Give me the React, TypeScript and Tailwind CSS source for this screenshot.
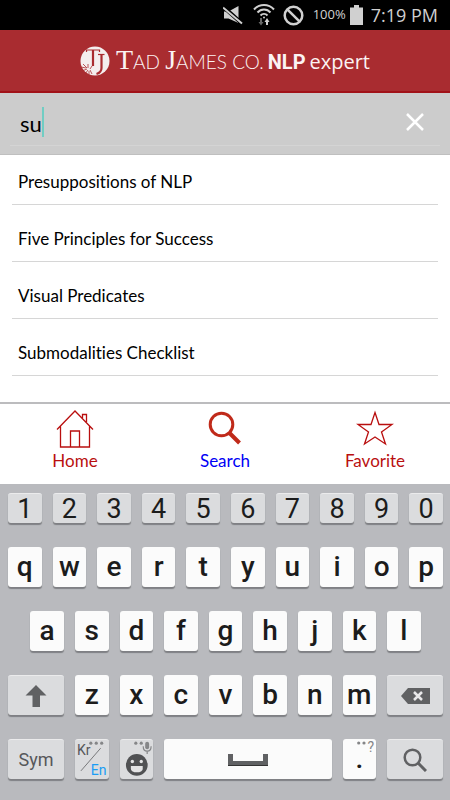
import React from "react";

const results = [
  "Presuppositions of NLP",
  "Five Principles for Success",
  "Visual Predicates",
  "Submodalities Checklist",
];

function StatusBar() {
  return (
    <div className="flex h-[30px] items-center justify-end bg-black pr-3 text-[#d0d0d0]">
      <svg className="mr-[10px] h-5 w-5" viewBox="0 0 20 20" fill="currentColor" aria-label="Muted">
        <path d="M1 6.500h4.500L15.500 1v17L5.500 13.500H1z" />
        <path d="M0 1.500L19 18.500" stroke="#000" strokeWidth="4" />
        <path d="M0 2.500L19 18.500" stroke="currentColor" strokeWidth="2" />
      </svg>
      <svg className="mr-2 h-6 w-[22px]" viewBox="0 0 22 24" fill="none" stroke="currentColor" strokeWidth="2" aria-label="Wi-Fi">
        <path d="M1 6.500C6.500 0.500 15.500 0.500 21 6.500M4.500 9.500c3.500-4 9.500-4 13 0M7.500 12.500c2-2 5-2 7 0" />
        <circle cx="11" cy="14.500" r="1" fill="currentColor" stroke="none" />
        <path d="M8 15v4" stroke="#666" />
        <path d="M5.500 19h5L8 22.500z" fill="#666" stroke="none" />
        <path d="M14 22v-4" />
        <path d="M11.500 19h5L14 15z" fill="currentColor" stroke="none" />
      </svg>
      <svg className="mr-[9px] h-[21px] w-[21px]" viewBox="0 0 21 21" fill="none" stroke="currentColor" strokeWidth="2.500" aria-label="Blocking mode">
        <circle cx="10.500" cy="10.500" r="8.800" />
        <path d="M4.300 4.300l12.400 12.400" />
      </svg>
      <span className="mr-1 font-['Open_Sans'] text-[13px]">100%</span>
      <svg className="mr-2 h-5 w-[13px]" viewBox="0 0 13 20" fill="currentColor" aria-label="Battery">
        <path d="M4 0h5v2.500h4V20H0V2.500h4z" />
      </svg>
      <span className="font-['Open_Sans'] text-lg">7:19 PM</span>
    </div>
  );
}

function Logo() {
  return (
    <svg className="mr-[6px] h-[30px] w-[30px] shrink-0" viewBox="0 0 30 30" aria-hidden="true">
      <circle cx="15" cy="15" r="14.500" fill="#f4eeee" />
      <g fill="none" stroke="#a92c30">
        <path d="M6.500 6V4h13v2" strokeWidth="1.200" />
        <path d="M13 4v16" strokeWidth="2.200" />
        <path d="M18 8.500h6.500" strokeWidth="1.200" />
        <path d="M21.500 8.500V22c0 3-2 5-5 6" strokeWidth="2.200" />
        <path d="M1 21l5 1M2 25l5-2M5 28l3-4M9 29l0-4M12 28l-2-4M3 18l4 4M8 18l0 4M12 20l-2 3" strokeWidth="0.800" />
      </g>
    </svg>
  );
}

function Header() {
  return (
    <header className="flex h-[63px] items-center justify-center border-b-2 border-[#a11218] bg-[#a92c30] text-[#fbf3f3]">
      <Logo />
      <h1 className="flex items-baseline leading-8 whitespace-nowrap">
        <span className="font-['Lato'] text-[19px] font-light">
          <span className="font-['Liberation_Serif'] text-[28px]">T</span>AD{" "}
          <span className="font-['Liberation_Serif'] text-[28px]">J</span>AMES CO.
        </span>
        <span className="ml-1 font-['Roboto'] text-xl font-bold">NLP</span>
        <span className="ml-1 font-['Open_Sans'] text-xl font-medium">expert</span>
      </h1>
    </header>
  );
}

function SearchBar() {
  return (
    <form className="border-b border-[#bfbfbf] bg-[#ccc] px-[10px] pb-2" onSubmit={(e) => e.preventDefault()}>
      <div className="flex h-[53px] items-center border-b border-[#d4d4d4] pt-[6px] pr-[14px] pl-[10px]">
        <input
          type="text"
          aria-label="Search"
          defaultValue="su"
          className="field-sizing-content shrink-0 bg-transparent pt-1 pr-2 font-['Lato'] text-[22px] leading-9 text-black outline-none"
        />
        <span className="-ml-2 h-[30px] w-[2px] bg-[#70cdc3]" />
        <button type="button" aria-label="Clear" className="ml-auto">
          <svg className="h-[22px] w-[22px]" viewBox="0 0 22 22" stroke="#fff" strokeWidth="2.500">
            <path d="M3 3l16 16M19 3L3 19" />
          </svg>
        </button>
      </div>
    </form>
  );
}

function Results() {
  return (
    <ul className="flex-1 bg-white px-3">
      {results.map((title) => (
        <li key={title} className="flex h-[57px] items-end border-b border-[#d6d6d6] pb-[10px] pl-[6px] first:h-[50px]">
          <a href="#" className="font-['Lato'] text-[17px] leading-6 text-black [font-variant-ligatures:none]">{title}</a>
        </li>
      ))}
    </ul>
  );
}

function Nav() {
  const item = "flex flex-1 flex-col items-center font-['Lato'] text-[17px] leading-6";
  return (
    <nav className="flex h-[82px] border-t-2 border-[#bcbcbe] bg-white pt-[5px] text-[#b90f0f]">
      <a href="#" className={item}>
        <svg className="h-10 w-[38px]" viewBox="0 0 38 40" fill="none" stroke="currentColor" strokeWidth="1.300">
          <path d="M1 20.500L19 2l18 18.500M4.500 17.500v20.500h29V17.500M14.500 38V22h9v16M26.500 9V5.500h4V13" />
        </svg>
        Home
      </a>
      <a href="#" className={`${item} text-[#0000f5]`}>
        <svg className="h-10 w-[38px]" viewBox="0 0 38 40" fill="none" stroke="#c02a1a">
          <circle cx="15.500" cy="15.500" r="11.300" strokeWidth="3" />
          <path d="M23.500 24l10 10" strokeWidth="4" />
        </svg>
        Search
      </a>
      <a href="#" className={item}>
        <svg className="h-10 w-[38px]" viewBox="0 0 38 40" fill="none" stroke="currentColor" strokeWidth="1.300">
          <path d="M19 3.500l4 12h13l-10.500 7.500 4 12L19 28 8.500 35l4-12L2 15.500h13z" />
        </svg>
        Favorite
      </a>
    </nav>
  );
}

type KeyProps = { children: React.ReactNode; className?: string; grey?: boolean; label?: string };

function Key({ children, className = "col-span-2 h-10 text-[28px] font-medium", grey, label }: KeyProps) {
  return (
    <button
      type="button"
      aria-label={label}
      className={`relative flex items-center justify-center rounded-[3px] leading-8 shadow-[0_2px_1px_#7f8084] ${
        grey ? "border-t border-[#ebebec] bg-[#dbdcde]" : "bg-[#fbfbfb]"
      } ${className}`}
    >
      {children}
    </button>
  );
}

function Keyboard() {
  const row = "grid grid-cols-20 gap-x-[11px]";
  return (
    <section aria-label="Keyboard" className="flex flex-col gap-6 bg-[#b9babe] pt-[9px] pr-[7px] pb-[21px] pl-2 font-['Roboto'] text-[#1c1c1c]">
      <div className={row}>
        {[..."1234567890"].map((k) => (
          <Key key={k} grey className="col-span-2 h-[30px] text-[27px] font-normal">{k}</Key>
        ))}
      </div>
      <div className={row}>
        {[..."qwertyuiop"].map((k) => <Key key={k}>{k}</Key>)}
      </div>
      <div className={row}>
        <span />
        {[..."asdfghjkl"].map((k) => <Key key={k}>{k}</Key>)}
      </div>
      <div className={row}>
        <Key grey label="Shift" className="col-span-3 h-10">
          <svg className="h-6 w-[22px]" viewBox="0 0 22 24" fill="#606163">
            <path d="M11 1l10.500 10.500H15V23H7.500V11.500H.5z" />
          </svg>
        </Key>
        {[..."zxcvbnm"].map((k) => <Key key={k}>{k}</Key>)}
        <Key grey label="Backspace" className="col-span-3 h-10">
          <svg className="h-4 w-[29px]" viewBox="0 0 29 16" fill="#606163">
            <path d="M0 8l7-8h22v16H7z" />
            <path d="M13 4l8 8M21 4l-8 8" stroke="#e8e8e9" strokeWidth="2.500" />
          </svg>
        </Key>
      </div>
      <div className={row}>
        <Key grey className="col-span-3 h-10">
          <span className="text-lg text-[#56575a]">Sym</span>
        </Key>
        <Key grey>
          <svg className="h-[39px] w-full" viewBox="0 0 34 39" aria-hidden="true">
            <path d="M6 31L26 8" stroke="#77787a" />
            <g fill="#858688"><circle cx="16" cy="3" r="1.600" /><circle cx="21.500" cy="3" r="1.600" /><circle cx="27" cy="3" r="1.600" /></g>
          </svg>
          <span className="absolute top-1 left-[2px] text-sm leading-3 font-normal text-[#56575a]">Kr</span>
          <span className="absolute right-[2px] bottom-[3px] text-sm leading-3 font-normal text-[#1a9cf5]">En</span>
        </Key>
        <Key grey label="Emoji">
          <svg className="h-[39px] w-full" viewBox="0 0 34 39" fill="none">
            <circle cx="17" cy="25" r="11" fill="#505153" />
            <circle cx="12.500" cy="21.500" r="1.700" fill="#e4e4e5" />
            <circle cx="21.500" cy="21.500" r="1.700" fill="#e4e4e5" />
            <path d="M11 26h12v2.500c0 2.500-2.500 4-6 4s-6-1.500-6-4z" fill="#e4e4e5" />
            <g fill="#858688"><circle cx="16" cy="3" r="1.600" /><circle cx="21.500" cy="3" r="1.600" /><rect x="25.500" y="1.500" width="4" height="7.500" rx="2" /></g>
            <path d="M23.500 6c0 3 1.500 5 4 5s4-2 4-5M27.500 11v3" stroke="#858688" strokeWidth="1.200" />
          </svg>
        </Key>
        <Key label="Space" className="col-span-8 h-10">
          <svg className="h-[13px] w-10" viewBox="0 0 40 13" fill="#606163">
            <path d="M0 1h5v7h30V1h5v12H0z" />
            <path d="M0 12h40v1H0z" fill="#333" />
          </svg>
        </Key>
        <Key>
          <span>.</span>
          <svg className="absolute top-[2px] right-[10px] h-1 w-[9px]" viewBox="0 0 9 4" fill="#858688" aria-hidden="true">
            <circle cx="1.700" cy="2" r="1.600" /><circle cx="7" cy="2" r="1.600" />
          </svg>
          <span className="absolute top-[2px] right-[2px] text-sm leading-3 font-normal text-[#858688]">?</span>
        </Key>
        <Key grey label="Search" className="col-span-3 h-10">
          <svg className="h-6 w-6" viewBox="0 0 24 24" fill="none" stroke="#606163">
            <circle cx="9.500" cy="9.500" r="7.800" strokeWidth="2.500" />
            <path d="M15 15l8 8" strokeWidth="3" />
          </svg>
        </Key>
      </div>
    </section>
  );
}

export default function App() {
  return (
    <main className="flex min-h-screen flex-col bg-white">
      <StatusBar />
      <Header />
      <SearchBar />
      <Results />
      <Nav />
      <Keyboard />
    </main>
  );
}
